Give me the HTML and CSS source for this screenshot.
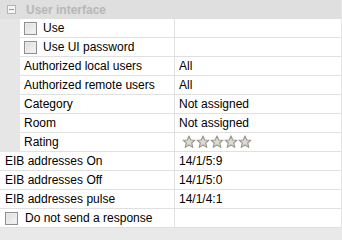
FILE: index.html
```html
<!DOCTYPE html>
<html>
<head>
<meta charset="utf-8">
<link rel="stylesheet" href="styles.css">
</head>
<body>
<div class="grid">
  <div class="cat">
    <span class="toggle"><span class="minus"></span></span>
    <span class="cat-title">User interface</span>
  </div>
  <div class="row">
    <div class="indent"></div>
    <div class="line">
      <div class="name sub"><span class="check"></span>Use</div>
      <div class="value"></div>
    </div>
  </div>
  <div class="row">
    <div class="indent"></div>
    <div class="line">
      <div class="name sub"><span class="check"></span>Use UI password</div>
      <div class="value"></div>
    </div>
  </div>
  <div class="row">
    <div class="indent"></div>
    <div class="line">
      <div class="name sub">Authorized local users</div>
      <div class="value">All</div>
    </div>
  </div>
  <div class="row">
    <div class="indent"></div>
    <div class="line">
      <div class="name sub">Authorized remote users</div>
      <div class="value">All</div>
    </div>
  </div>
  <div class="row">
    <div class="indent"></div>
    <div class="line">
      <div class="name sub">Category</div>
      <div class="value">Not assigned</div>
    </div>
  </div>
  <div class="row">
    <div class="indent"></div>
    <div class="line">
      <div class="name sub">Room</div>
      <div class="value">Not assigned</div>
    </div>
  </div>
  <div class="row">
    <div class="indent"></div>
    <div class="line">
      <div class="name sub">Rating</div>
      <div class="value stars">
        <svg class="star" viewBox="0 0 14 14"><path d="M7 1 L8.7 5 L13 5.2 L9.7 8 L10.8 12.4 L7 10 L3.2 12.4 L4.3 8 L1 5.2 L5.3 5 Z"/></svg>
        <svg class="star" viewBox="0 0 14 14"><path d="M7 1 L8.7 5 L13 5.2 L9.7 8 L10.8 12.4 L7 10 L3.2 12.4 L4.3 8 L1 5.2 L5.3 5 Z"/></svg>
        <svg class="star" viewBox="0 0 14 14"><path d="M7 1 L8.7 5 L13 5.2 L9.7 8 L10.8 12.4 L7 10 L3.2 12.4 L4.3 8 L1 5.2 L5.3 5 Z"/></svg>
        <svg class="star" viewBox="0 0 14 14"><path d="M7 1 L8.7 5 L13 5.2 L9.7 8 L10.8 12.4 L7 10 L3.2 12.4 L4.3 8 L1 5.2 L5.3 5 Z"/></svg>
        <svg class="star" viewBox="0 0 14 14"><path d="M7 1 L8.7 5 L13 5.2 L9.7 8 L10.8 12.4 L7 10 L3.2 12.4 L4.3 8 L1 5.2 L5.3 5 Z"/></svg>
      </div>
    </div>
  </div>
  <div class="row">
    <div class="line">
      <div class="name top">EIB addresses On</div>
      <div class="value">14/1/5:9</div>
    </div>
  </div>
  <div class="row">
    <div class="line">
      <div class="name top">EIB addresses Off</div>
      <div class="value">14/1/5:0</div>
    </div>
  </div>
  <div class="row">
    <div class="line">
      <div class="name top">EIB addresses pulse</div>
      <div class="value">14/1/4:1</div>
    </div>
  </div>
  <div class="row">
    <div class="line">
      <div class="name top"><span class="check low"></span>Do not send a response</div>
      <div class="value"></div>
    </div>
  </div>
</div>
</body>
</html>
```

FILE: styles.css
```css
html, body {
  margin: 0;
  padding: 0;
}
body {
  width: 342px;
  height: 230px;
  background: #e9e9e9;
  font-family: "Liberation Sans", Arial, sans-serif;
  font-size: 12px;
  color: #000;
  overflow: hidden;
}
.grid {
  width: 341px;
  background: #fff;
  border-right: 1px solid #e6e6e6;
}
.cat {
  height: 19px;
  background: #dfdfdf;
  display: flex;
  align-items: center;
}
.toggle {
  width: 7px;
  height: 7px;
  margin-left: 7px;
  margin-right: 10px;
  border: 1px solid #b4b4b4;
  background: #f4f4f4;
  display: flex;
  align-items: center;
  justify-content: center;
}
.minus {
  width: 5px;
  height: 1px;
  background: #9a9a9a;
}
.cat-title {
  font-weight: bold;
  color: #b7b7b7;
}
.row {
  display: flex;
  height: 19px;
}
.indent {
  width: 20px;
  background: #e6e6e6;
  flex: none;
}
.line {
  flex: 1;
  display: flex;
  border-bottom: 1px solid #e0e0e0;
}
.name {
  display: flex;
  align-items: center;
  border-right: 1px solid #e0e0e0;
  box-sizing: border-box;
  white-space: nowrap;
}
.name.sub {
  width: 155px;
  padding-left: 4px;
}
.name.top {
  width: 175px;
  padding-left: 5px;
}
.value {
  flex: 1;
  display: flex;
  align-items: center;
  padding-left: 4px;
}
.check {
  width: 11px;
  height: 11px;
  border: 1px solid #8f8f8f;
  background: linear-gradient(135deg, #dcdcdc, #f6f6f6);
  box-shadow: inset 0 0 0 1px #ececec;
  margin-right: 6px;
  flex: none;
}
.check.low {
  margin-right: 7px;
}
.stars {
  padding-left: 7px;
  gap: 0;
}
.star {
  width: 14px;
  height: 14px;
  display: block;
}
.star path {
  fill: #dcdad4;
  stroke: #9a958a;
  stroke-width: 1.1;
  stroke-linejoin: round;
}
```
